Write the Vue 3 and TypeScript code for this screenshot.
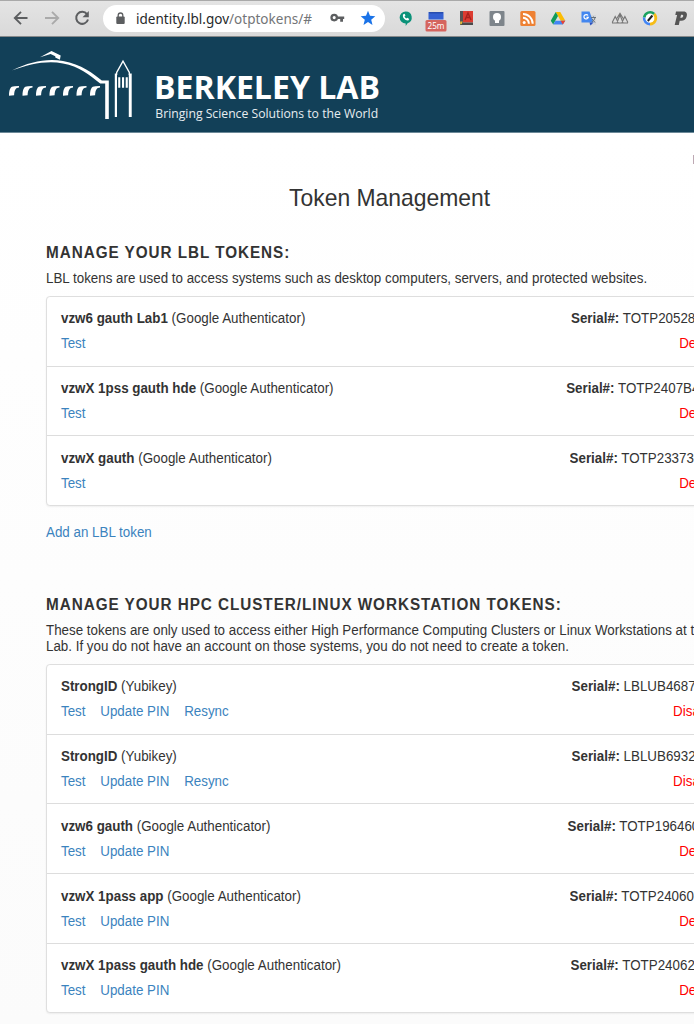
<script setup lang="ts">
interface Token {
  name: string
  kind: string
  actions: string[]
  serial: string
  serialWidth: number
  remove: string
  removeWidth: number
}

const google = 'Google Authenticator'

const lblTokens: Token[] = [
  { name: 'vzw6 gauth Lab1', kind: google, actions: ['Test'], serial: 'TOTP20528', serialWidth: 129, remove: 'De', removeWidth: 15.7 },
  { name: 'vzwX 1pss gauth hde', kind: google, actions: ['Test'], serial: 'TOTP2407B4', serialWidth: 134, remove: 'De', removeWidth: 15.7 },
  { name: 'vzwX gauth', kind: google, actions: ['Test'], serial: 'TOTP23373', serialWidth: 130.5, remove: 'De', removeWidth: 15.7 },
]

const hpcTokens: Token[] = [
  { name: 'StrongID', kind: 'Yubikey', actions: ['Test', 'Update PIN', 'Resync'], serial: 'LBLUB4687', serialWidth: 128.4, remove: 'Disa', removeWidth: 22 },
  { name: 'StrongID', kind: 'Yubikey', actions: ['Test', 'Update PIN', 'Resync'], serial: 'LBLUB6932', serialWidth: 128.4, remove: 'Disa', removeWidth: 22 },
  { name: 'vzw6 gauth', kind: google, actions: ['Test', 'Update PIN'], serial: 'TOTP196460', serialWidth: 132.6, remove: 'De', removeWidth: 15.7 },
  { name: 'vzwX 1pass app', kind: google, actions: ['Test', 'Update PIN'], serial: 'TOTP24060', serialWidth: 130.5, remove: 'De', removeWidth: 15.7 },
  { name: 'vzwX 1pass gauth hde', kind: google, actions: ['Test', 'Update PIN'], serial: 'TOTP24062', serialWidth: 129.5, remove: 'De', removeWidth: 15.7 },
]

const sections = [
  {
    id: 'lbl',
    title: 'MANAGE YOUR LBL TOKENS:',
    lines: ['LBL tokens are used to access systems such as desktop computers, servers, and protected websites.'],
    tokens: lblTokens,
    add: 'Add an LBL token',
  },
  {
    id: 'hpc',
    title: 'MANAGE YOUR HPC CLUSTER/LINUX WORKSTATION TOKENS:',
    lines: [
      'These tokens are only used to access either High Performance Computing Clusters or Linux Workstations at t',
      'Lab. If you do not have an account on those systems, you do not need to create a token.',
    ],
    tokens: hpcTokens,
    add: '',
  },
]
</script>

<template>
  <div class="page">
    <div class="toolbar">
      <div class="nav">
        <svg width="16" height="16" viewBox="0 0 16 16"><path d="M14.5 8H2.5M8 1.8 1.8 8 8 14.2" fill="none" stroke="#5c5e60" stroke-width="1.9" /></svg>
        <svg width="16" height="16" viewBox="0 0 16 16"><path d="M1 8h12.5M8 1.8 14.2 8 8 14.2" fill="none" stroke="#aaa" stroke-width="1.9" /></svg>
        <svg width="16" height="16" viewBox="0 0 16 16"><path d="M13 4.2A6 6 0 1 0 14 9.5" fill="none" stroke="#5c5e60" stroke-width="2" /><path d="M14.8 1v6.3H8.5z" fill="#5c5e60" /></svg>
      </div>
      <div class="address">
        <svg class="lock" width="9" height="13" viewBox="0 0 9 13"><rect x=".3" y="4.5" width="8.4" height="7.5" rx="1" fill="#5c5e60" /><path d="M2.2 5V3.3a2.3 2.3 0 0 1 4.6 0V5" fill="none" stroke="#5c5e60" stroke-width="1.3" /></svg>
        <svg class="url" width="180" height="24"><text x="0" y="16.5" textLength="176" lengthAdjust="spacingAndGlyphs"><tspan fill="#27292b">identity.lbl.gov</tspan><tspan fill="#737577">/otptokens/#</tspan></text></svg>
        <svg class="key" width="15" height="10" viewBox="0 0 15 10"><circle cx="4.2" cy="4.6" r="2.7" fill="none" stroke="#5c5e60" stroke-width="2.3" /><path d="M7 3.4h7.2v2.7H13v2.6h-2.8V6.1H7z" fill="#5c5e60" /></svg>
        <svg class="star" width="16" height="16" viewBox="0 0 16 16"><path d="m8 .8 2 5 5.3.4-4.1 3.5 1.3 5.3L8 12.1 3.5 15l1.3-5.3L.7 6.2 6 5.8z" fill="#1a73e8" /></svg>
      </div>
      <div class="extensions">
        <svg viewBox="0 0 24 28"><path d="M11.7 7.5a6 6 0 0 1 1.9 11.7L11.7 22v-2.4a6 6 0 0 1 0-12.1z" fill="#0b9279" /><path d="M9 10.5c-.8 3 2 6.3 5.3 6l1-1.5-2-1.3-1 .8c-1-.5-1.6-1.3-1.8-2.2l1-.8-.9-1.8z" fill="#fff" /></svg>
        <svg viewBox="0 0 24 28"><rect x="4.5" y="8" width="15" height="7.5" fill="#3561d2" /><rect x="5" y="8" width="14" height="1.5" fill="#294eae" /><rect x="1.5" y="16" width="21" height="11.5" rx="1.5" fill="#d5655e" /><text x="12" y="25.2" text-anchor="middle" font-size="9" fill="#fff" textLength="17" lengthAdjust="spacingAndGlyphs">25m</text></svg>
        <svg viewBox="0 0 24 28"><path d="M5 7h3v14H5z" fill="#555" /><path d="M8 7h10v11.5H8z" fill="#dc3c31" /><path d="M6 18.5h12V21H5z" fill="#4b4b4b" /><path d="M5.2 17.5h2.5l-1 2.5-1.5.5z" fill="#e8bd36" /><path d="m10 16 3-7 3 7m-5-2.5h4" fill="none" stroke="#a7221d" stroke-width="1.4" /></svg>
        <svg viewBox="0 0 24 28"><rect x="4.5" y="7" width="15" height="15" rx="1" fill="#7e858b" /><circle cx="12" cy="13" r="4" fill="#fff" /><path d="M10 16h4v3h-4z" fill="#fff" /></svg>
        <svg viewBox="0 0 24 28"><rect x="4.3" y="7" width="15.2" height="15" rx="1.5" fill="#ee8133" /><circle cx="8.2" cy="18.4" r="1.5" fill="#fff" /><path d="M7 13.8a6 6 0 0 1 5.9 5.9M7 10a9.7 9.7 0 0 1 9.7 9.7" fill="none" stroke="#fff" stroke-width="2" /></svg>
        <svg viewBox="0 0 24 28"><path d="M9.7 8h4.6l5 8.7h-4.6z" fill="#fbbc04" /><path d="m9.7 8 2.3 4-4.8 8.5-2.4-3.8z" fill="#119b59" /><path d="m9.5 16.7-2.3 3.8h9.6l2.5-3.8z" fill="#4285f4" /><path d="M14.6 16.7h4.7l-2.5 3.8z" fill="#ea4335" /></svg>
        <svg viewBox="0 0 24 28"><path d="M11 11h8v10h-7z" fill="#d5d6d8" /><path d="M4.5 7.5h8l4 11h-12z" fill="#4487ef" /><path d="m12.5 18.5 1 3 3-3z" fill="#2850c0" /><path d="M11 11.5a2.2 2.2 0 1 0 .3 1.8H9.5" fill="none" stroke="#fff" stroke-width="1.2" /><path d="M14 13.5h5m-2.5-1v1m1.5 0c-.4 2-1.6 3.7-3.3 4.7m.3-3.5c.7 1.7 1.8 2.8 3.3 3.7" fill="none" stroke="#68727b" stroke-width="1" /></svg>
        <svg viewBox="0 0 24 28"><path d="m4.2 18.5 3-6 3 6m-2-3 3.8-6.3 3.8 6.3m-1.9 3 3-6 3 6M9 18.5l3-7.5 3 7.5M4 19h16" fill="none" stroke="#777" stroke-width="1.1" /></svg>
        <svg viewBox="0 0 24 28"><circle cx="12" cy="14.2" r="5.8" fill="#fff" /><path d="M6.2 13.5a5.9 5.9 0 0 1 10-3.5" fill="none" stroke="#1aa260" stroke-width="2.6" /><path d="M16.2 10A6 6 0 0 1 12 20.1" fill="none" stroke="#f6bd16" stroke-width="2.6" /><path d="M12 20.1A6 6 0 0 1 6.1 13.5" fill="none" stroke="#4285f4" stroke-width="2.6" /><path d="m9.8 17 4.6-5.5" stroke="#222" stroke-width="2" /></svg>
        <svg viewBox="0 0 24 28"><path fill-rule="evenodd" d="M7 7.5h7.3c3.8 0 4.1 2.8 3.3 5.2-.7 2.6-2.6 4-5.4 4h-1.5L9.8 21H5.7l2.4-10H6.3zm5.1 3.3-.8 3h1.4c1.6 0 2.2-3 .6-3z" fill="#555" /></svg>
      </div>
    </div>

    <header class="banner">
      <svg width="390" height="95" viewBox="0 0 390 95" fill="#fff">
        <path d="M12 33.6C30 24.5 47 21.3 63 24c18 3 31 13.2 38.8 19.5h7V82h-3.6V46.6h-5C89 37.5 79 29.3 63 26.4 46 23.3 29 27.3 12 33.6z" />
        <path d="m40 20.2 11.5-6.3 9.2 4.5-.8 4.3-4.6-2.2v-1.3l-4.7-2.2z" />
        <g v-for="n in 7" :key="n" :transform="`translate(${9 + (n - 1) * 13.5} 49)`">
          <path d="M0 9.7C.1 3.5 1.2.2 5.5.2L10 0v1.5C6.8 1.6 5.3 4 5.1 9.2z" />
        </g>
        <path d="M114.8 36.5h2.2v43.6h-2.2zM128.8 36.5h2.9v43.6h-2.9z" />
        <path d="M116 38v-2.8l7-12.4 7 12.4V38h-1.3v-2.2L123 25.4l-5.7 10.4V38z" />
        <path d="M118.2 40.2h2.1v10.5h-2.1zM122 40.2h2.1v10.5H122zM125.7 40.2h2.1v10.5h-2.1z" />
        <text x="154" y="62.3" font-size="32.3" font-weight="700" textLength="226" lengthAdjust="spacingAndGlyphs">BERKELEY LAB</text>
        <text x="155.3" y="80.5" font-size="12.7" textLength="222.8" lengthAdjust="spacingAndGlyphs" fill="#e7edf0">Bringing Science Solutions to the World</text>
      </svg>
    </header>

    <main>
      <div class="edge-mark"></div>
      <h1>Token Management</h1>
      <section v-for="s in sections" :key="s.id" :class="s.id">
        <h2>{{ s.title }}</h2>
        <p><span v-for="line in s.lines" :key="line">{{ line }}</span></p>
        <ul>
          <li v-for="(t, i) in s.tokens" :key="i">
            <div class="line">
              <span><b>{{ t.name }}</b> ({{ t.kind }})</span>
              <span class="clip" :style="{ width: t.serialWidth + 'px' }"><b>Serial#:</b> {{ t.serial }}</span>
            </div>
            <div class="line">
              <span class="actions"><a v-for="a in t.actions" :key="a">{{ a }}</a></span>
              <span class="clip remove" :style="{ width: t.removeWidth + 'px' }">{{ t.remove }}</span>
            </div>
          </li>
        </ul>
        <a v-if="s.add" class="add">{{ s.add }}</a>
      </section>
    </main>
  </div>
</template>

<style>
body {
  margin: 0;
  overflow: hidden;
}
</style>

<style scoped>
.page {
  width: 694px;
  height: 1024px;
  overflow: hidden;
  background: linear-gradient(#fff 13%, #fbfbfb);
  color: #333;
  font: 14px/20px "Liberation Sans", Arial, sans-serif;
}
.toolbar {
  box-sizing: border-box;
  height: 37px;
  display: flex;
  align-items: center;
  background: linear-gradient(#e4e4e4, #d9d9d9);
  border-top: 1px solid #a9a9a9;
  border-bottom: 1px solid #858889;
  font-family: "Noto Sans", sans-serif;
}
.nav {
  display: flex;
  gap: 14.5px;
  width: 90px;
  padding-left: 13px;
  margin-bottom: 1px;
}
.nav svg,
.address svg,
.extensions svg {
  display: block;
  flex: none;
}
.address {
  box-sizing: border-box;
  display: flex;
  align-items: center;
  width: 282px;
  height: 27px;
  padding-left: 13px;
  border-radius: 14px;
  background: #fff;
}
.lock {
  margin-bottom: 1px;
}
.url {
  margin-left: 11px;
  font-size: 14px;
}
.key {
  margin-left: 14px;
  margin-bottom: 2px;
}
.star {
  margin-left: 15px;
  margin-bottom: 1px;
}
.extensions {
  display: flex;
  gap: 6.6px;
  padding-left: 8.5px;
}
.extensions svg {
  width: 24px;
  height: 28px;
  margin-bottom: 2px;
}
.banner {
  box-sizing: border-box;
  height: 96px;
  background: #124058;
  border-bottom: 1px solid #6c8998;
  font-family: "Open Sans", sans-serif;
}
.banner svg {
  display: block;
}
main {
  display: flow-root;
}
.edge-mark {
  width: 1px;
  height: 9px;
  margin: 22px 0 0 693px;
  background: #bda8b3;
}
h1 {
  margin: 20px 0 0 289px;
  font-size: 23.6px;
  line-height: 28px;
  font-weight: 400;
  transform: scaleX(0.971);
  transform-origin: 0 0;
}
/* Text and panels are set slightly condensed. */
section {
  width: 679px;
  margin-left: 46px;
  transform: scaleX(0.9545);
  transform-origin: 0 0;
}
.lbl {
  margin-top: 31px;
}
.hpc {
  margin-top: 53px;
}
h2 {
  margin: 0;
  font-size: 16px;
  line-height: 20px;
  letter-spacing: 1px;
  white-space: nowrap;
}
p {
  margin: 8px 0 9.4px;
  line-height: 15.5px;
}
p span {
  display: block;
  white-space: nowrap;
}
ul {
  box-sizing: border-box;
  margin: 0;
  padding: 0;
  width: 700px;
  list-style: none;
  background: #fff;
  border: 1px solid #ddd;
  border-radius: 4px;
  box-shadow: 0 1px 2px rgba(0, 0, 0, 0.06);
}
li {
  box-sizing: border-box;
  height: 68.9px;
  padding: 11.6px 20px 0 14.7px;
  display: flex;
  flex-direction: column;
  gap: 5px;
}
li + li {
  height: 69.6px;
  border-top: 1px solid #ddd;
}
.line {
  display: flex;
  justify-content: space-between;
  white-space: nowrap;
}
.clip {
  overflow: hidden;
}
.actions {
  display: flex;
  gap: 15.5px;
}
a {
  color: #3b83be;
}
.remove {
  color: #f00;
}
.add {
  display: block;
  margin-top: 16.5px;
}
</style>
